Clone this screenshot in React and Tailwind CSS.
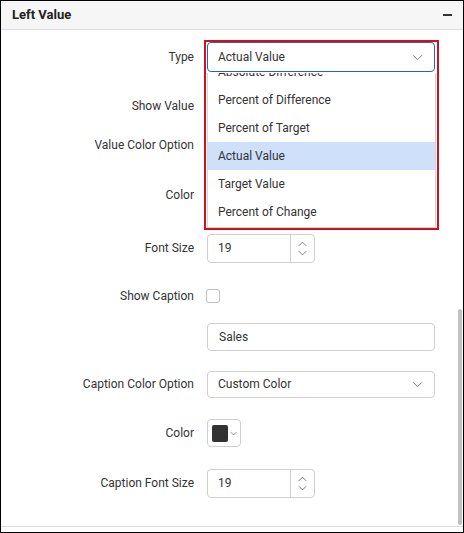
import { useState } from "react";

function Chevron({ className = "" }) {
  return (
    <svg viewBox="0 0 12 8" className={className} fill="none" stroke="currentColor" strokeWidth="1.1">
      <path d="M1 1.5l5 5 5-5" />
    </svg>
  );
}

function Row({ label, top, children }) {
  return (
    <div className={`flex items-center h-[30px] ${top}`}>
      <div className="w-[193px] text-right text-[12px] text-[#333] shrink-0">{label}</div>
      <div className="ml-[13px] flex items-center">{children}</div>
    </div>
  );
}

function Spinner({ value }) {
  return (
    <div className="flex w-[108px] h-[29px] border border-[#cfcfcf] rounded-[4px] bg-white">
      <div className="flex-1 flex items-center pl-[10px] text-[12px] text-[#333]">{value}</div>
      <div className="w-[24px] border-l border-[#cfcfcf] flex flex-col items-center justify-center gap-[3px] text-[#666]">
        <Chevron className="w-[9px] h-[6px] rotate-180" />
        <Chevron className="w-[9px] h-[6px]" />
      </div>
    </div>
  );
}

const options = [
  "Absolute Difference",
  "Percent of Difference",
  "Percent of Target",
  "Actual Value",
  "Target Value",
  "Percent of Change",
];

export default function App() {
  const [selected] = useState("Actual Value");

  return (
    <div
      className="relative w-[464px] h-[533px] border border-black bg-white overflow-hidden"
      style={{ fontFamily: "Roboto, 'Liberation Sans', sans-serif" }}
    >
      <div className="h-[29px] bg-[#f6f6f6] border-b border-[#dcdcdc] flex items-center justify-between pl-[11px] pr-[11px]">
        <span className="text-[13px] font-bold text-[#222]">Left Value</span>
        <span className="w-[9px] h-[1.5px] bg-[#333]" />
      </div>

      <div className="h-[497px] border-b border-[#d9d9d9] flex flex-col">
        <Row label="Type" top="mt-[12px]">
          <div className="w-[228px] h-[30px] border border-[#2c5fc4] rounded-[4px] flex items-center justify-between pl-[10px] pr-[11px] text-[12px] text-[#333]">
            <span>{selected}</span>
            <Chevron className="w-[11px] h-[7px] text-[#777]" />
          </div>
        </Row>
        <Row label="Show Value" top="mt-[19px]">
          <div className="w-[14px] h-[14px] border border-[#bbb] rounded-[3px]" />
        </Row>
        <Row label="Value Color Option" top="mt-[9px]">
          <div />
        </Row>
        <Row label="Color" top="mt-[20px]">
          <div />
        </Row>
        <Row label="Font Size" top="mt-[23px]">
          <Spinner value="19" />
        </Row>
        <Row label="Show Caption" top="mt-[18px]">
          <div className="w-[14px] h-[14px] border border-[#bbb] rounded-[3px] -ml-[1px]" />
        </Row>
        <Row label="" top="mt-[11px]">
          <div className="w-[228px] h-[28px] border border-[#cfcfcf] rounded-[4px] flex items-center pl-[11px] text-[12px] text-[#333]">
            Sales
          </div>
        </Row>
        <Row label="Caption Color Option" top="mt-[17px]">
          <div className="w-[228px] h-[27px] border border-[#cfcfcf] rounded-[4px] flex items-center justify-between pl-[10px] pr-[11px] text-[12px] text-[#333]">
            <span>Custom Color</span>
            <Chevron className="w-[11px] h-[7px] text-[#777]" />
          </div>
        </Row>
        <Row label="Color" top="mt-[19px]">
          <div className="w-[34px] h-[28px] border border-[#cfcfcf] rounded-[4px] flex items-center pl-[4px] gap-[2px]">
            <div className="w-[16px] h-[17px] bg-[#333] rounded-[2px]" />
            <Chevron className="w-[7px] h-[5px] text-[#666]" />
          </div>
        </Row>
        <Row label="Caption Font Size" top="mt-[20px]">
          <Spinner value="19" />
        </Row>
      </div>

      {/* open dropdown list */}
      <div className="absolute left-[206px] top-[72px] w-[229px] h-[155px] bg-white border-x border-b border-[#d6d6d6] overflow-hidden">
        <div className="-mt-[15px]">
          {options.map((o) => (
            <div
              key={o}
              className={`h-[28px] flex items-center pl-[10px] text-[12px] text-[#333] ${
                o === selected ? "bg-[#cfe0fb]" : ""
              }`}
            >
              {o}
            </div>
          ))}
        </div>
      </div>

      {/* highlight annotation */}
      <div className="absolute left-[203px] top-[39px] w-[235px] h-[190px] border-2 border-[#d0101e]" />

      {/* scrollbar */}
      <div className="absolute right-[1px] top-[308px] w-[4px] h-[216px] bg-[#c1c1c1] rounded-[2px]" />
    </div>
  );
}
